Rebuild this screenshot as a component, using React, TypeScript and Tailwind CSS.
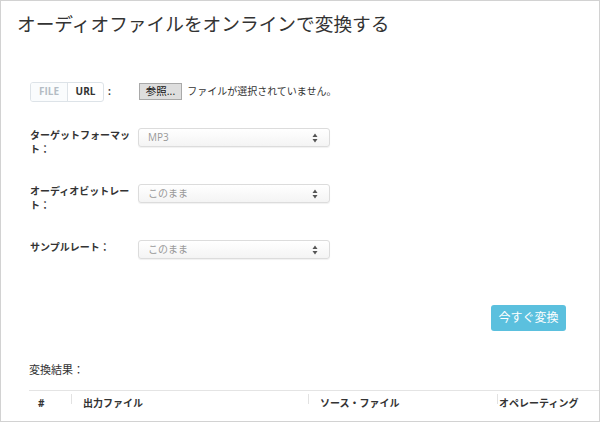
const font = { fontFamily: '"Open Sans", "Noto Sans CJK JP", sans-serif' };

function Arrows() {
  return (
    <svg width="6" height="10" viewBox="0 0 6 10" className="text-[#555]">
      <path d="M3 0.5 L5.5 4 H0.5 Z" fill="currentColor" />
      <path d="M3 9.5 L5.5 6 H0.5 Z" fill="currentColor" />
    </svg>
  );
}

function FakeSelect({ value }: { value: string }) {
  return (
    <div className="flex h-[19px] w-[192px] items-center justify-between rounded-[3px] border border-[#dcdcdc] bg-gradient-to-b from-white to-[#f4f4f4] pl-[9px] pr-[11px] shadow-[0_1px_1px_rgba(0,0,0,0.06)]">
      <span className="text-[10px] text-[#999]">{value}</span>
      <Arrows />
    </div>
  );
}

function FormRow({ label, value }: { label: string; value: string }) {
  return (
    <div className="flex items-start">
      <div className="mr-[4px] w-[104px] text-[10px] font-bold leading-[14px] text-[#333]">{label}</div>
      <FakeSelect value={value} />
    </div>
  );
}

export default function App() {
  return (
    <div style={font} className="h-[422px] w-[600px] overflow-hidden border border-[#d2d2d2] bg-white text-[#333]">
      <h1 className="pl-[16px] pt-[11px] text-[18.7px] font-normal leading-[24px] text-[#333]">
        オーディオファイルをオンラインで変換する
      </h1>

      <div className="pl-[29px] pt-[46px]">
        <div className="flex h-[19px] items-center">
          <div className="flex h-[20px] overflow-hidden rounded-[3px] border border-[#dde3e8] text-[10px] font-bold">
            <span className="flex w-[36px] items-center justify-center bg-[#fafcfd] text-[#b4bcc4]">FILE</span>
            <span className="flex w-[36px] items-center justify-center border-l border-[#dde3e8] text-[#333]">URL</span>
          </div>
          <span className="ml-[4px] text-[10px] font-bold">:</span>
          <div className="ml-[28px] flex h-[17px] items-center border border-[#a9a9a9] bg-[#dedede] px-[6px] text-[10.5px] leading-none text-[#111]">
            参照...
          </div>
          <span className="ml-[5px] text-[10px] text-[#333]">ファイルが選択されていません。</span>
        </div>

        <div className="mt-[27px] flex flex-col gap-[28px]">
          <FormRow label="ターゲットフォーマット：" value="MP3" />
          <FormRow label="オーディオビットレート：" value="このまま" />
          <FormRow label="サンプルレート：" value="このまま" />
        </div>
      </div>

      <div className="flex justify-end pr-[33px] pt-[46px]">
        <button className="h-[26px] w-[75px] rounded-[3px] bg-[#5bc0de] text-[12px] text-white">今すぐ変換</button>
      </div>

      <div className="pl-[28px] pt-[32px] text-[11px] leading-[14px]">変換結果：</div>

      <div className="ml-[28px] mt-[13px] grid grid-cols-[42px_237px_189px_1fr] border-t border-[#e4e4e4] text-[10px] font-bold leading-[24px]">
        <div className="pl-[9px]">#</div>
        <div className="relative pl-[12px]">
          <span className="absolute left-0 top-[3px] h-[10px] w-px bg-[#e2e2e2]" />
          出力ファイル
        </div>
        <div className="relative pl-[12px]">
          <span className="absolute left-0 top-[3px] h-[10px] w-px bg-[#e2e2e2]" />
          ソース・ファイル
        </div>
        <div className="relative pl-[2px]">
          <span className="absolute left-0 top-[3px] h-[10px] w-px bg-[#e2e2e2]" />
          オペレーティング
        </div>
      </div>
    </div>
  );
}
